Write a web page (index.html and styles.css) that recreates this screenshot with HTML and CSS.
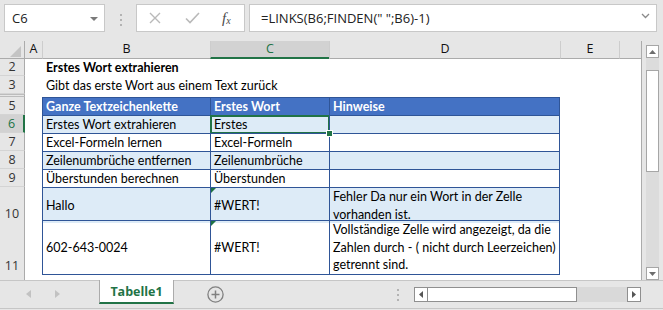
FILE: index.html
```html
<!DOCTYPE html>
<html lang="de">
<head>
<meta charset="UTF-8">
<title>Erstes Wort extrahieren</title>
<link rel="stylesheet" href="styles.css">
</head>
<body>
  <div class="formula-bar">
    <div class="name-box">C6<span class="caret"></span></div>
    <div class="grip"><span></span><span></span><span></span></div>
    <div class="fx-box">
      <svg class="fx-cancel" width="12" height="12" viewBox="0 0 12 12"><path d="M1 1L11 11M11 1L1 11" stroke="#b9b9b9" stroke-width="1.4" fill="none"/></svg>
      <svg class="fx-enter" width="15" height="12" viewBox="0 0 15 12"><path d="M1 6.5L5 10.5L14 1" stroke="#b9b9b9" stroke-width="1.6" fill="none"/></svg>
      <span class="fx"><i>f</i><sub>x</sub></span>
    </div>
    <div class="formula">
      <span>=LINKS(B6;FINDEN(" ";B6)-1)</span>
      <svg class="chevron" width="9" height="6" viewBox="0 0 9 6"><path d="M1 1L4.5 4.5L8 1" stroke="#8a8a8a" stroke-width="1.3" fill="none"/></svg>
    </div>
  </div>

  <div class="workspace">
    <div class="sheet">
      <div class="row colhead">
        <div class="corner"><span></span></div>
        <div class="ch">A</div>
        <div class="ch">B</div>
        <div class="ch sel">C</div>
        <div class="ch">D</div>
        <div class="ch">E</div>
        <div class="ch"></div>
      </div>

      <div class="row r18">
        <div class="rh">2</div><div></div>
        <div class="cell title">Erstes Wort extrahieren</div>
      </div>
      <div class="row r18">
        <div class="rh">3</div><div></div>
        <div class="cell">Gibt das erste Wort aus einem Text zurück</div>
      </div>
      <div class="row r3">
        <div class="rh hidden-row"></div>
      </div>

      <div class="row r18">
        <div class="rh">5</div><div></div>
        <div class="t th">Ganze Textzeichenkette</div>
        <div class="t th">Erstes Wort</div>
        <div class="t th last">Hinweise</div>
      </div>
      <div class="row r18 band">
        <div class="rh sel">6</div><div></div>
        <div class="t">Erstes Wort extrahieren</div>
        <div class="t active">Erstes</div>
        <div class="t last"></div>
      </div>
      <div class="row r18">
        <div class="rh">7</div><div></div>
        <div class="t">Excel-Formeln lernen</div>
        <div class="t">Excel-Formeln</div>
        <div class="t last"></div>
      </div>
      <div class="row r18 band">
        <div class="rh">8</div><div></div>
        <div class="t">Zeilenumbrüche entfernen</div>
        <div class="t">Zeilenumbrüche</div>
        <div class="t last"></div>
      </div>
      <div class="row r18">
        <div class="rh">9</div><div></div>
        <div class="t">Überstunden berechnen</div>
        <div class="t">Überstunden</div>
        <div class="t last"></div>
      </div>
      <div class="row r33 band">
        <div class="rh">10</div><div></div>
        <div class="t">Hallo</div>
        <div class="t err">#WERT!</div>
        <div class="t last wrap">Fehler Da nur ein Wort in der Zelle<br>vorhanden ist.</div>
      </div>
      <div class="row r54 bottom">
        <div class="rh">11</div><div></div>
        <div class="t">602-643-0024</div>
        <div class="t err">#WERT!</div>
        <div class="t last wrap">Vollständige Zelle wird angezeigt, da die<br>Zahlen durch - ( nicht durch Leerzeichen)<br>getrennt sind.</div>
      </div>
      <div class="row r6">
        <div class="rh cut">12</div>
      </div>
    </div>

    <div class="vscroll">
      <div class="sb-btn"><svg width="7" height="4" viewBox="0 0 7 4"><path d="M0 4L3.5 0L7 4Z" fill="#6d6d6d"/></svg></div>
      <div class="sb-track"><div class="sb-thumb"></div></div>
      <div class="sb-btn"><svg width="7" height="4" viewBox="0 0 7 4"><path d="M0 0L3.5 4L7 0Z" fill="#6d6d6d"/></svg></div>
    </div>
  </div>

  <div class="tabbar">
    <div class="nav">
      <svg width="5" height="8" viewBox="0 0 5 8"><path d="M5 0L0 4L5 8Z" fill="#c2c2c2"/></svg>
      <svg width="5" height="8" viewBox="0 0 5 8"><path d="M0 0L5 4L0 8Z" fill="#c2c2c2"/></svg>
    </div>
    <div class="tab">Tabelle1</div>
    <svg class="add-sheet" width="17" height="17" viewBox="0 0 17 17">
      <circle cx="8.5" cy="8.5" r="7.6" stroke="#808080" stroke-width="1.3" fill="none"/>
      <path d="M8.5 4.5V12.5M4.5 8.5H12.5" stroke="#808080" stroke-width="1.5"/>
    </svg>
    <div class="hscroll">
      <div class="grip-h"><span></span><span></span><span></span></div>
      <div class="hs-btn"><svg width="4" height="7" viewBox="0 0 4 7"><path d="M4 0L0 3.5L4 7Z" fill="#555"/></svg></div>
      <div class="hs-thumb"></div>
      <div class="hs-track"></div>
      <div class="hs-btn"><svg width="4" height="7" viewBox="0 0 4 7"><path d="M0 0L4 3.5L0 7Z" fill="#555"/></svg></div>
    </div>
  </div>
  <div class="status"></div>
</body>
</html>
```

FILE: styles.css
```css
body {
  margin: 0;
  width: 663px;
  height: 310px;
  overflow: hidden;
  background: #e6e6e6;
  font-family: 'Open Sans', sans-serif;
  color: #222;
}

/* Bearbeitungsleiste */
.formula-bar {
  height: 41px;
  box-sizing: border-box;
  padding-top: 4px;
  display: flex;
  align-items: flex-start;
}
.name-box {
  margin-left: 4px;
  width: 101px;
  height: 28px;
  box-sizing: border-box;
  background: #fff;
  border: 1px solid #c8c8c8;
  padding-left: 7px;
  font-size: 13px;
  display: flex;
  align-items: center;
  position: relative;
}
.caret {
  position: absolute;
  right: 6px;
  top: 12px;
  border-left: 4px solid transparent;
  border-right: 4px solid transparent;
  border-top: 4px solid #7a7a7a;
}
.grip {
  width: 31px;
  padding-top: 10px;
  display: flex;
  flex-direction: column;
  align-items: center;
  gap: 3px;
}
.grip span, .grip-h span {
  width: 2px;
  height: 2px;
  background: #b3b3b3;
}
.fx-box {
  width: 109px;
  height: 28px;
  box-sizing: border-box;
  background: #fff;
  border: 1px solid #c8c8c8;
  padding-left: 12px;
  display: flex;
  align-items: center;
}
.fx-enter {
  margin-left: 24px;
}
.fx {
  margin-left: 22px;
  font-family: 'Liberation Serif', serif;
  font-size: 15px;
  color: #4a4a4a;
  line-height: 1;
}
.fx sub {
  font-size: 10px;
  font-style: italic;
  vertical-align: -1px;
}
.formula {
  margin-left: 4px;
  width: 408px;
  height: 28px;
  box-sizing: border-box;
  background: #fff;
  border: 1px solid #c8c8c8;
  padding: 0 6px 0 11px;
  font-size: 13px;
  display: flex;
  align-items: center;
  justify-content: space-between;
}
.chevron {
  margin-top: -5px;
}

/* Tabellenblatt */
.workspace {
  height: 239px;
  display: flex;
}
.sheet {
  width: 642px;
  box-sizing: border-box;
  border-right: 1px solid #ababab;
  background: #fff;
  overflow: hidden;
}
.row {
  display: grid;
  grid-template-columns: 25px 17px 168px 119px 231px 59px 22px;
}
.r18 { height: 18px; }
.r3 { height: 3px; }
.r33 { height: 33px; }
.r54 { height: 54px; }
.r6 { height: 6px; }

.colhead {
  height: 17px;
  background: #e6e6e6;
}
.corner {
  border-right: 1px solid #ababab;
  border-bottom: 1px solid #ababab;
  position: relative;
}
.corner span {
  position: absolute;
  right: 3px;
  bottom: 1px;
  border-left: 11px solid transparent;
  border-bottom: 11px solid #c4c4c4;
}
.ch {
  border-bottom: 1px solid #ababab;
  border-left: 1px solid #cdcdcd;
  font-size: 12.5px;
  text-align: center;
  line-height: 16px;
  color: #111;
}
.ch:nth-child(2) {
  border-left: none;
}
.ch.sel {
  background: #d2d2d2;
  color: #217346;
  border-bottom: 2px solid #217346;
}

.rh {
  background: #e6e6e6;
  border-right: 1px solid #ababab;
  border-bottom: 1px solid #d4d4d4;
  font-size: 12.5px;
  color: #333;
  text-align: center;
  display: flex;
  align-items: flex-end;
  justify-content: center;
  line-height: 16px;
  overflow: hidden;
}
.rh.sel {
  background: #d2d2d2;
  color: #217346;
  border-right: 2px solid #217346;
}
.rh.hidden-row {
  border-top: 1px solid #bcbcbc;
  border-bottom: 1px solid #bcbcbc;
}
.rh.cut {
  align-items: flex-start;
  padding-top: 3px;
  border-bottom: none;
}

.cell {
  font-family: 'Lato', sans-serif;
  font-size: 12.5px;
  padding-left: 4px;
  white-space: nowrap;
  display: flex;
  align-items: center;
  color: #000;
}
.cell.title {
  font-weight: bold;
}

.t {
  border-left: 1px solid #2f5597;
  border-top: 1px solid #2f5597;
  padding: 0 3px;
  font-family: 'Lato', sans-serif;
  font-size: 12.5px;
  color: #000;
  white-space: nowrap;
  display: flex;
  align-items: center;
  position: relative;
}
.t.last {
  border-right: 1px solid #2f5597;
}
.t.th {
  background: #4472c4;
  color: #fff;
  font-weight: bold;
}
.band .t {
  background: #ddebf7;
}
.bottom .t {
  border-bottom: 1px solid #2f5597;
}
.t.wrap {
  line-height: 17.5px;
}
.t.err::before {
  content: "";
  position: absolute;
  left: 0;
  top: 0;
  border-top: 5px solid #1e7145;
  border-right: 5px solid transparent;
}
.t.active::after {
  content: "";
  position: absolute;
  left: -1px;
  top: -1px;
  right: -1px;
  bottom: -1px;
  border: 2px solid #217346;
}
.t.active::before {
  content: "";
  position: absolute;
  right: -4px;
  bottom: -4px;
  width: 5px;
  height: 5px;
  background: #217346;
  border: 1px solid #fff;
  z-index: 2;
}

/* Bildlaufleisten */
.vscroll {
  width: 21px;
  box-sizing: border-box;
  padding: 4px 4px 0;
  display: flex;
  flex-direction: column;
}
.sb-btn {
  height: 13px;
  box-sizing: border-box;
  background: #fff;
  border: 1px solid #a6a6a6;
  display: flex;
  align-items: center;
  justify-content: center;
}
.sb-track {
  flex: 1;
  background: #dcdcdc;
  padding-top: 12px;
}
.sb-thumb {
  height: 102px;
  box-sizing: border-box;
  background: #fff;
  border: 1px solid #a6a6a6;
}

.tabbar {
  height: 28px;
  box-sizing: border-box;
  border-top: 1px solid #c6c6c6;
  display: flex;
  align-items: flex-start;
}
.nav {
  width: 99px;
  height: 26px;
  display: flex;
  align-items: center;
  padding-left: 26px;
  box-sizing: border-box;
  gap: 24px;
}
.tab {
  width: 75px;
  height: 24px;
  box-sizing: border-box;
  margin-top: -1px;
  background: #fff;
  border-left: 1px solid #ababab;
  border-right: 1px solid #ababab;
  border-bottom: 2px solid #217346;
  color: #217346;
  font-size: 12.5px;
  font-weight: bold;
  text-align: center;
  line-height: 23px;
}
.add-sheet {
  margin: 5px 0 0 33px;
}
.hscroll {
  margin: 6px 22px 0 auto;
  height: 15px;
  display: flex;
}
.grip-h {
  width: 17px;
  display: flex;
  flex-direction: column;
  justify-content: center;
  gap: 3px;
}
.hs-btn {
  width: 14px;
  box-sizing: border-box;
  background: #fff;
  border: 1px solid #8f8f8f;
  display: flex;
  align-items: center;
  justify-content: center;
}
.hs-thumb {
  width: 149px;
  box-sizing: border-box;
  background: #fff;
  border: 1px solid #8f8f8f;
  border-left: none;
}
.hs-track {
  width: 50px;
  background: #d9d9d9;
}
.status {
  height: 2px;
  border-top: 1px solid #c6c6c6;
}
```
